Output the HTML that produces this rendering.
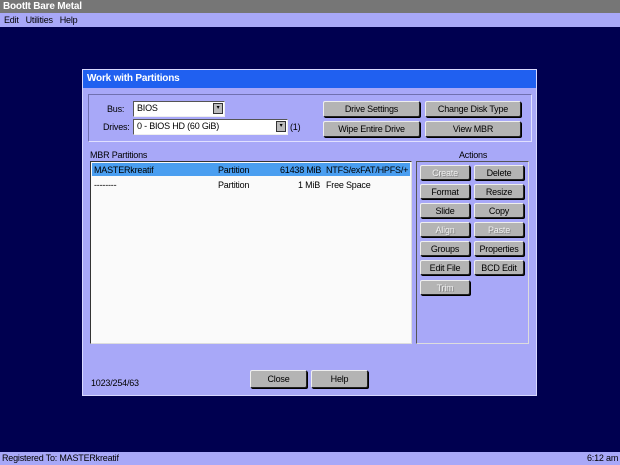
<!DOCTYPE html>
<html><head><style>
*{margin:0;padding:0;box-sizing:border-box}
body{width:620px;height:465px;background:#000050;font-family:"Liberation Sans",sans-serif;font-size:9px;letter-spacing:-0.2px;position:relative;overflow:hidden;color:#000}
.a{position:absolute;white-space:nowrap}
.btn{position:absolute;background:#b4b4b4;border:1px solid #222;border-top-color:#eee;border-left-color:#eee;box-shadow:1px 1px 0 #000;text-align:center;font-size:9px;line-height:14px;border-radius:2px}
.dis{color:#eee;text-shadow:1px 1px 0 #888}
.combo{position:absolute;background:#fff;border:1px solid #555;border-right-color:#eee;border-bottom-color:#eee;font-size:9px;line-height:13px;padding-left:3px}
.dd{position:absolute;right:1px;top:1px;width:10px;height:11px;background:#bbb;border:1px solid #333;font-size:6px;line-height:9px;text-align:center}
</style></head><body>
<div class="a" style="left:0;top:0;width:620px;height:13px;background:#767676;color:#fff;font-weight:bold;font-size:10px;line-height:13px;padding-left:3px">BootIt Bare Metal</div>
<div class="a" style="left:0;top:13px;width:620px;height:14px;background:#a8a8f8;line-height:14px;padding-left:4px;font-size:9px">Edit&nbsp;&nbsp;&nbsp;Utilities&nbsp;&nbsp;&nbsp;Help</div>

<div class="a" style="left:82px;top:69px;width:455px;height:327px;background:#a8a8f8;border:1px solid #d8d8ff"></div>
<div class="a" style="left:83px;top:70px;width:453px;height:18px;background:#2060f0;color:#fff;font-weight:bold;font-size:10px;line-height:18px;padding-left:4px">Work with Partitions</div>
<div class="a" style="left:88px;top:94px;width:444px;height:48px;border:1px solid #7070b0;border-right-color:#e0e0ff;border-bottom-color:#e0e0ff"></div>
<div class="a" style="left:107px;top:104px">Bus:</div>
<div class="combo" style="left:133px;top:101px;width:92px;height:16px">BIOS<div class="dd">▾</div></div>
<div class="a" style="left:103px;top:122px">Drives:</div>
<div class="combo" style="left:133px;top:119px;width:155px;height:16px">0 - BIOS HD (60 GiB)<div class="dd">▾</div></div>
<div class="a" style="left:290px;top:122px">(1)</div>
<div class="btn" style="left:323px;top:101px;width:97px;height:16px">Drive Settings</div>
<div class="btn" style="left:425px;top:101px;width:96px;height:16px">Change Disk Type</div>
<div class="btn" style="left:323px;top:121px;width:97px;height:16px">Wipe Entire Drive</div>
<div class="btn" style="left:425px;top:121px;width:96px;height:16px">View MBR</div>

<div class="a" style="left:90px;top:150px">MBR Partitions</div>
<div class="a" style="left:459px;top:150px">Actions</div>
<div class="a" style="left:90px;top:161px;width:322px;height:183px;background:#fafafa;border:1px solid #333;border-right-color:#ddd;border-bottom-color:#ddd"></div>
<div class="a" style="left:92px;top:163px;width:318px;height:13px;background:#4a9ef0"></div>
<div class="a" style="left:94px;top:165px">MASTERkreatif</div>
<div class="a" style="left:218px;top:165px">Partition</div>
<div class="a" style="left:280px;top:165px">61438 MiB</div>
<div class="a" style="left:326px;top:165px">NTFS/exFAT/HPFS/+</div>
<div class="a" style="left:94px;top:180px">--------</div>
<div class="a" style="left:218px;top:180px">Partition</div>
<div class="a" style="left:298px;top:180px">1 MiB</div>
<div class="a" style="left:326px;top:180px">Free Space</div>
<div class="a" style="left:416px;top:161px;width:113px;height:183px;border:1px solid #555;border-right-color:#ddd;border-bottom-color:#ddd"></div>

<div class="btn dis" style="left:420px;top:165px;width:50px;height:15px">Create</div>
<div class="btn" style="left:474px;top:165px;width:50px;height:15px">Delete</div>
<div class="btn" style="left:420px;top:184px;width:50px;height:15px">Format</div>
<div class="btn" style="left:474px;top:184px;width:50px;height:15px">Resize</div>
<div class="btn" style="left:420px;top:203px;width:50px;height:15px">Slide</div>
<div class="btn" style="left:474px;top:203px;width:50px;height:15px">Copy</div>
<div class="btn dis" style="left:420px;top:222px;width:50px;height:15px">Align</div>
<div class="btn dis" style="left:474px;top:222px;width:50px;height:15px">Paste</div>
<div class="btn" style="left:420px;top:241px;width:50px;height:15px">Groups</div>
<div class="btn" style="left:474px;top:241px;width:50px;height:15px">Properties</div>
<div class="btn" style="left:420px;top:260px;width:50px;height:15px">Edit File</div>
<div class="btn" style="left:474px;top:260px;width:50px;height:15px">BCD Edit</div>
<div class="btn dis" style="left:420px;top:280px;width:50px;height:15px">Trim</div>

<div class="a" style="left:91px;top:378px">1023/254/63</div>
<div class="btn" style="left:250px;top:370px;width:57px;height:18px;line-height:16px">Close</div>
<div class="btn" style="left:311px;top:370px;width:57px;height:18px;line-height:16px">Help</div>

<div class="a" style="left:0;top:452px;width:620px;height:13px;background:#a8a8f8;line-height:13px;padding-left:2px">Registered To: MASTERkreatif</div>
<div class="a" style="left:587px;top:452px;line-height:13px">6:12 am</div>
</body></html>
